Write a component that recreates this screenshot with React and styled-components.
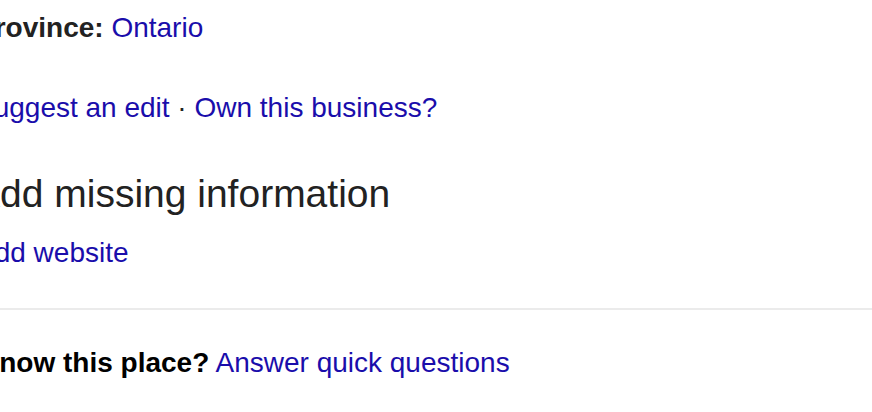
import React from 'react';
import styled, { createGlobalStyle } from 'styled-components';

const GlobalStyle = createGlobalStyle`
  html, body {
    margin: 0;
    padding: 0;
    background: #fff;
  }
  body {
    font-family: "Liberation Sans", Arial, sans-serif;
    overflow: hidden;
  }
`;

const Page = styled.div`
  width: 872px;
  height: 412px;
  overflow: hidden;
`;

const Panel = styled.div`
  margin-left: -24px;
  display: flex;
  flex-direction: column;
`;

const Line = styled.div`
  font-size: 28px;
  line-height: 34px;
  color: #222;
  margin-top: ${(p) => p.$top || 0}px;
  margin-left: ${(p) => p.$shift || 0}px;
  white-space: nowrap;
`;

const Label = styled.span`
  font-weight: bold;
  color: ${(p) => (p.$dark ? '#000' : '#222')};
`;

const Link = styled.a`
  color: #1a0dab;
  text-decoration: none;
  cursor: pointer;
`;

const Heading = styled.h2`
  margin: 45px 0 0 -2px;
  font-size: 39px;
  line-height: 48px;
  font-weight: normal;
  color: #222;
  white-space: nowrap;
`;

const Divider = styled.hr`
  margin: 38px 0 0 24px;
  border: none;
  height: 2px;
  background: #ebebeb;
`;

export default function App() {
  return (
    <Page>
      <GlobalStyle />
      <Panel>
        <Line $top={11}>
          <Label>Province:</Label> <Link>Ontario</Link>
        </Line>
        <Line $top={46} $shift={-1}>
          <Link>Suggest an edit</Link> · <Link>Own this business?</Link>
        </Line>
        <Heading>Add missing information</Heading>
        <Line $top={18}>
          <Link>Add website</Link>
        </Line>
        <Divider />
        <Line $top={36} $shift={3}>
          <Label $dark>Know this place?</Label> <Link>Answer quick questions</Link>
        </Line>
      </Panel>
    </Page>
  );
}
